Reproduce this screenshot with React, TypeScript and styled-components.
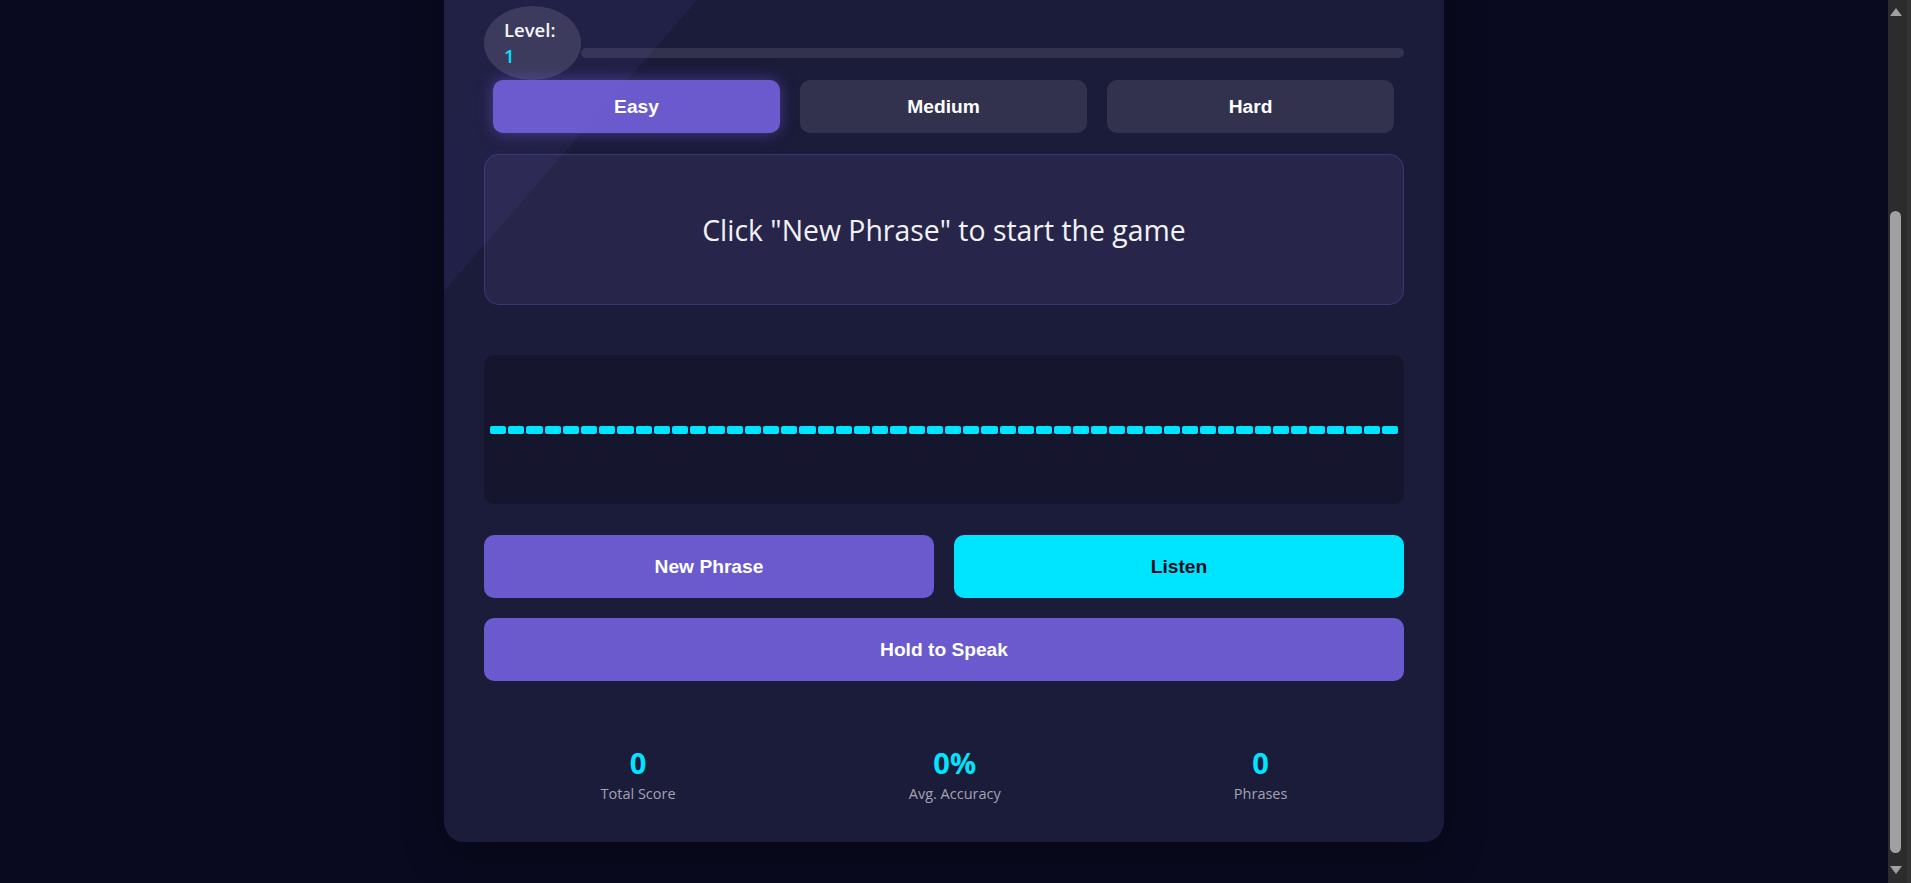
import React, { useEffect, useLayoutEffect } from 'react'
import styled, { createGlobalStyle, css } from 'styled-components'

const colors = {
  page: '#090a1f',
  card: '#1b1b3a',
  purple: '#6a5acd',
  cyan: '#00e5ff',
  ink: '#0d0d22',
  text: '#f2f2f7',
  muted: 'rgba(255, 255, 255, 0.6)',
  scrollTrack: '#2c2c2c',
  scrollThumb: '#a0a0a0',
}

const GlobalStyle = createGlobalStyle`
  html, body {
    margin: 0;
    padding: 0;
    background: ${colors.page};
  }

  body {
    font-family: 'Open Sans', 'Noto Sans', sans-serif;
    color: ${colors.text};
  }
`

const levels = ['Easy', 'Medium', 'Hard']

const stats = [
  { value: '0', label: 'Total Score' },
  { value: '0%', label: 'Avg. Accuracy' },
  { value: '0', label: 'Phrases' },
]

const App: React.FC = () => {
  const bars = Array.from({ length: 50 }, (_, i) => i)

  const scrollToEnd = () => {
    window.scrollTo(0, document.documentElement.scrollHeight)
  }

  useLayoutEffect(scrollToEnd, [])

  useEffect(() => {
    const id = requestAnimationFrame(scrollToEnd)
    return () => cancelAnimationFrame(id)
  }, [])

  return (
    <>
      <GlobalStyle />
      <Page>
        <Card>
          <CardTop />

          <LevelRow>
            <LevelBadge>
              <span>Level:</span>
              <LevelValue>1</LevelValue>
            </LevelBadge>
            <LevelTrack>
              <LevelFill style={{ width: '0%' }} />
            </LevelTrack>
          </LevelRow>

          <DifficultyRow>
            {levels.map((l) => (
              <DifficultyButton key={l} $active={l === 'Easy'}>
                {l}
              </DifficultyButton>
            ))}
          </DifficultyRow>

          <PhraseBox>Click "New Phrase" to start the game</PhraseBox>

          <Visualizer>
            {bars.map((i) => (
              <VisBar key={i} />
            ))}
          </Visualizer>

          <ControlsRow>
            <ActionButton $tone="purple">New Phrase</ActionButton>
            <ActionButton $tone="cyan">Listen</ActionButton>
          </ControlsRow>

          <HoldButton $tone="purple">Hold to Speak</HoldButton>

          <Stats>
            {stats.map((s) => (
              <StatItem key={s.label}>
                <StatValue>{s.value}</StatValue>
                <StatLabel>{s.label}</StatLabel>
              </StatItem>
            ))}
          </Stats>
        </Card>
      </Page>

      {/* the window's scrollbar, drawn over the page's right edge */}
      <ScrollBar aria-hidden>
        <ScrollArrow $dir="up" />
        <ScrollThumb />
        <ScrollArrow $dir="down" />
      </ScrollBar>
    </>
  )
}

const Page = styled.div`
  display: flex;
  justify-content: center;
  padding: 40px 43px 41px 20px;
`

const Card = styled.main`
  position: relative;
  width: 1000px;
  box-sizing: border-box;
  padding: 40px 40px 38px;
  background: ${colors.card};
  border-radius: 20px;
  box-shadow: 0 10px 40px rgba(0, 0, 0, 0.35);
  overflow: hidden;

  &::before {
    content: '';
    position: absolute;
    inset: 0;
    z-index: 2;
    pointer-events: none;
    background: linear-gradient(
      131deg,
      rgba(124, 104, 238, 0.055) 0,
      rgba(124, 104, 238, 0.065) 351px,
      transparent 351px
    );
  }
`

const CardTop = styled.div`
  height: 210px;
`

const LevelRow = styled.div`
  display: flex;
  align-items: flex-start;
`

const LevelBadge = styled.div`
  width: 97px;
  height: 74px;
  box-sizing: border-box;
  padding: 0 20px;
  display: flex;
  flex-direction: column;
  justify-content: center;
  border-radius: 50%;
  background: rgba(255, 255, 255, 0.13);
  font-size: 18.5px;
  font-weight: 600;
  line-height: 26px;
  color: #fff;
`

const LevelValue = styled.span`
  color: ${colors.cyan};
`

const LevelTrack = styled.div`
  flex: 1;
  height: 10px;
  margin-top: 42px;
  border-radius: 5px;
  background: rgba(255, 255, 255, 0.1);
  overflow: hidden;
`

const LevelFill = styled.div`
  height: 100%;
  background: ${colors.cyan};
`

const buttonBase = css`
  border: 0;
  cursor: pointer;
  font-family: 'Liberation Sans', Arial, sans-serif;
  font-size: 19.2px;
  font-weight: 700;
  line-height: 23px;
`

const DifficultyRow = styled.div`
  display: grid;
  grid-template-columns: repeat(3, 1fr);
  gap: 20px;
  padding: 0 10px 0 9px;
`

const DifficultyButton = styled.button<{ $active?: boolean }>`
  ${buttonBase};
  height: 53px;
  border-radius: 10px;
  color: #fff;
  background: ${(p) => (p.$active ? colors.purple : 'rgba(255, 255, 255, 0.1)')};
  box-shadow: ${(p) => (p.$active ? '0 0 15px rgba(106, 90, 205, 0.55)' : 'none')};
`

const PhraseBox = styled.div`
  margin-top: 21px;
  height: 151px;
  box-sizing: border-box;
  display: flex;
  align-items: center;
  justify-content: center;
  background: #27264a;
  border: 1px solid rgba(106, 90, 205, 0.32);
  border-radius: 15px;
  font-size: 28.4px;
  color: ${colors.text};
`

const Visualizer = styled.div`
  margin-top: 50px;
  height: 149px;
  display: flex;
  align-items: center;
  gap: 2px;
  padding: 0 6px;
  background: rgba(0, 0, 0, 0.2);
  border-radius: 10px;
`

const VisBar = styled.div`
  flex: 1;
  height: 8px;
  border-radius: 2px;
  background: ${colors.cyan};
`

const ControlsRow = styled.div`
  margin-top: 31px;
  display: grid;
  grid-template-columns: 1fr 1fr;
  gap: 20px;
`

const ActionButton = styled.button<{ $tone: 'purple' | 'cyan' }>`
  ${buttonBase};
  height: 63px;
  border-radius: 10px;
  color: ${(p) => (p.$tone === 'cyan' ? colors.ink : '#fff')};
  background: ${(p) => (p.$tone === 'cyan' ? colors.cyan : colors.purple)};
`

const HoldButton = styled(ActionButton)`
  display: block;
  width: 100%;
  margin-top: 20px;
`

const Stats = styled.section`
  margin-top: 65px;
  display: flex;
  justify-content: space-around;
`

const StatItem = styled.div`
  text-align: center;
`

const StatValue = styled.div`
  font-size: 29px;
  font-weight: 700;
  line-height: 34px;
  color: ${colors.cyan};
`

const StatLabel = styled.div`
  margin-top: 4px;
  font-size: 14.5px;
  line-height: 20px;
  color: ${colors.muted};
`

const ScrollBar = styled.div`
  position: fixed;
  top: 0;
  right: 0;
  bottom: 0;
  width: 23px;
  box-sizing: border-box;
  display: flex;
  flex-direction: column;
  align-items: center;
  padding: 8px 0 9px;
  padding-right: 4px;
  background: ${colors.scrollTrack};
  border-right: 4px solid #333333;
  z-index: 10;
`

const ScrollArrow = styled.div<{ $dir: 'up' | 'down' }>`
  width: 0;
  height: 0;
  border-left: 6.5px solid transparent;
  border-right: 6.5px solid transparent;
  ${(p) =>
    p.$dir === 'up'
      ? css`
          border-bottom: 8px solid ${colors.scrollThumb};
        `
      : css`
          border-top: 8px solid ${colors.scrollThumb};
        `}
`

const ScrollThumb = styled.div`
  flex: 1;
  width: 11px;
  margin: 195px 0 13px;
  border-radius: 6px;
  background: ${colors.scrollThumb};
`

export default App
